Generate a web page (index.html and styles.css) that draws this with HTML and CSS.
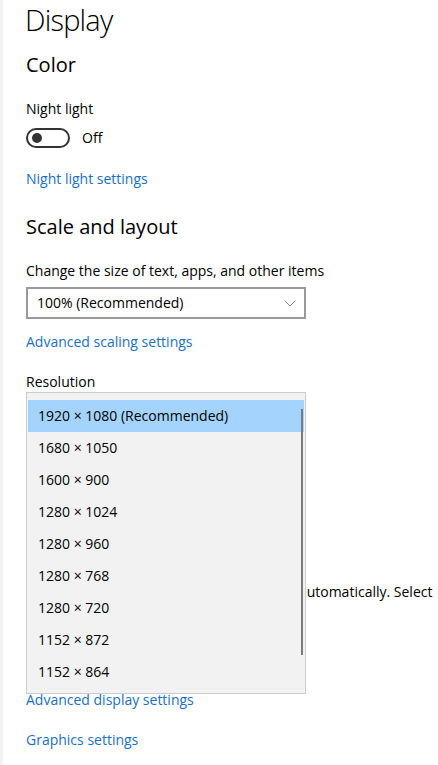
FILE: index.html
```html
<!DOCTYPE html>
<html lang="en">
<head>
<meta charset="utf-8">
<title>Display</title>
<link rel="stylesheet" href="styles.css">
</head>
<body>
<div class="page">
  <h1 class="title">Display</h1>

  <h2 class="section section-color">Color</h2>
  <div class="label label-night">Night light</div>
  <div class="toggle-row">
    <span class="toggle"><span class="knob"></span></span>
    <span class="toggle-text">Off</span>
  </div>
  <a class="link link-night">Night light settings</a>

  <h2 class="section section-scale">Scale and layout</h2>
  <div class="label label-size">Change the size of text, apps, and other items</div>
  <div class="select select-scale">
    <span>100% (Recommended)</span>
    <svg class="chevron" width="12" height="7" viewBox="0 0 12 7"><path d="M0.5 0.5 L6 6 L11.5 0.5" fill="none" stroke="#8a8a8a" stroke-width="1"/></svg>
  </div>
  <a class="link link-scaling">Advanced scaling settings</a>

  <div class="label label-res">Resolution</div>
  <div class="select-wrap">
    <div class="select select-res"></div>
    <ul class="menu">
      <li class="item selected">1920 × 1080 (Recommended)</li>
      <li class="item">1680 × 1050</li>
      <li class="item">1600 × 900</li>
      <li class="item">1280 × 1024</li>
      <li class="item">1280 × 960</li>
      <li class="item">1280 × 768</li>
      <li class="item">1280 × 720</li>
      <li class="item">1152 × 872</li>
      <li class="item">1152 × 864</li>
      <li class="scrollbar"></li>
    </ul>
  </div>

  <p class="note">Older displays might not always connect automatically. Select</p>

  <a class="link link-display">Advanced display settings</a>
  <a class="link link-graphics">Graphics settings</a>
</div>
</body>
</html>
```

FILE: styles.css
```css
html, body {
  margin: 0;
  padding: 0;
  background: #ffffff;
  overflow: hidden;
}

body {
  font-family: "Open Sans", "Noto Sans", "Liberation Sans", sans-serif;
  font-size: 14px;
  color: #000000;
  border-left: 3px solid #f2f2f2;
  height: 765px;
  box-sizing: border-box;
}

.page {
  padding: 2px 0 0 23px;
  display: flex;
  flex-direction: column;
  align-items: flex-start;
}

.title {
  margin: 0 0 0 -1px;
  font-size: 29px;
  font-weight: 300;
  line-height: 36px;
  letter-spacing: -0.8px;
}

.section {
  margin: 0;
  font-size: 20px;
  font-weight: 400;
  line-height: 28px;
}

.section-color { margin-top: 13px; }
.section-scale { margin-top: 24px; }

.label {
  line-height: 20px;
}
.label-night { margin-top: 20px; }
.label-size { margin-top: 20px; }
.label-res { margin-top: 20px; }

.toggle-row {
  margin-top: 9px;
  display: flex;
  align-items: center;
  gap: 12px;
  height: 20px;
}

.toggle {
  width: 44px;
  height: 20px;
  box-sizing: border-box;
  border: 2px solid #333333;
  border-radius: 10px;
  display: flex;
  align-items: center;
  padding-left: 4px;
}

.knob {
  width: 10px;
  height: 10px;
  border-radius: 50%;
  background: #333333;
}

.toggle-text {
  line-height: 20px;
}

.link {
  color: #1a6fc0;
  line-height: 20px;
  text-decoration: none;
}
.link-night { margin-top: 21px; }
.link-scaling { margin-top: 13px; }
.link-display { margin-top: 88px; }
.link-graphics { margin-top: 20px; }

.select {
  box-sizing: border-box;
  width: 280px;
  height: 32px;
  border: 2px solid #999999;
  display: flex;
  align-items: center;
  justify-content: space-between;
  padding: 0 8px 0 9px;
  line-height: 20px;
}
.select-scale { margin-top: 6px; }

.chevron {
  display: block;
}

.select-wrap {
  position: relative;
}

.menu {
  position: absolute;
  top: 0;
  left: 0;
  z-index: 2;
  box-sizing: border-box;
  width: 280px;
  height: 302px;
  margin: 0;
  padding: 7px 1px 0 1px;
  list-style: none;
  background: #f2f2f2;
  border: 1px solid #cccccc;
}

.item {
  height: 32px;
  line-height: 32px;
  padding-left: 10px;
  white-space: nowrap;
}

.item.selected {
  background: #a4d4fd;
}

.scrollbar {
  position: absolute;
  right: 2px;
  top: 16px;
  width: 2px;
  height: 246px;
  background: #7a7a7a;
}

.note {
  margin: 158px 0 0 0;
  line-height: 20px;
  white-space: nowrap;
  text-indent: 7px;
}
```
